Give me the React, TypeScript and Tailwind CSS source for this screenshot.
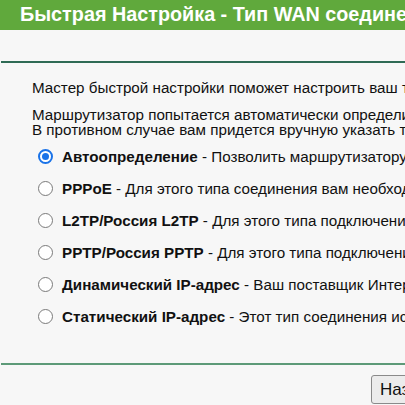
import React from 'react';

const options = [
    { title: 'Автоопределение', desc: 'Позволить маршрутизатору автоматически определить тип подключения', checked: true },
    { title: 'PPPoE', desc: 'Для этого типа соединения вам необходимо указать имя пользователя и пароль' },
    { title: 'L2TP/Россия L2TP', desc: 'Для этого типа подключения вам необходимо указать имя пользователя и пароль' },
    { title: 'PPTP/Россия PPTP', desc: 'Для этого типа подключения вам необходимо указать имя пользователя и пароль' },
    { title: 'Динамический IP-адрес', desc: 'Ваш поставщик Интернет-услуг использует DHCP-сервер' },
    { title: 'Статический IP-адрес', desc: 'Этот тип соединения использует фиксированный IP-адрес' },
];

const Radio = ({ checked }: { checked?: boolean }) =>
    checked ? (
        <span className="w-[15px] h-[15px] rounded-full border-2 border-[#1a73e8] bg-white flex items-center justify-center shrink-0">
            <span className="w-[7px] h-[7px] rounded-full bg-[#1a73e8]" />
        </span>
    ) : (
        <span className="w-[15px] h-[15px] rounded-full border border-[#7a7a7a] bg-white shrink-0" />
    );

export default function App() {
    return (
        <div className="w-[405px] h-[405px] overflow-hidden bg-[#f7f7f7] text-[#111] font-['Liberation_Sans',Arial,sans-serif]">
            {/* Header */}
            <div className="h-[30px] bg-[#60a93c] flex items-center pl-[20px] whitespace-nowrap">
                <h1 className="text-[19.8px] font-bold text-white">Быстрая Настройка - Тип WAN соединения</h1>
            </div>

            <div className="h-[31px]" />
            <div className="ml-[1px] h-[2px] bg-[#2f6b55]" />

            {/* Body */}
            <div className="pl-[32px] pt-[17px] text-[15.2px] leading-[16px] whitespace-nowrap">
                <p>Мастер быстрой настройки поможет настроить ваш тип подключения к Интернету.</p>
                <p className="mt-[11px]">Маршрутизатор попытается автоматически определить тип подключения.</p>
                <p className="-mt-[1px]">В противном случае вам придется вручную указать тип подключения.</p>
            </div>

            <div className="pl-[38px] pt-[11px] flex flex-col gap-[17px] text-[15.2px] leading-[15px] whitespace-nowrap">
                {options.map((o) => (
                    <label key={o.title} className="flex items-center gap-[9px]">
                        <Radio checked={o.checked} />
                        <span>
                            <b className="font-bold">{o.title}</b> - {o.desc}
                        </span>
                    </label>
                ))}
            </div>

            <div className="h-[39px]" />
            <div className="ml-[1px] h-[2px] bg-[#5d9a78]" />

            <div className="pl-[371px] pt-[10px] whitespace-nowrap">
                <button className="h-[29px] px-[8px] bg-[#ececec] border border-[#8a8a8a] rounded-[3px] text-[17px] text-[#111]">
                    Назад
                </button>
            </div>
        </div>
    );
}
